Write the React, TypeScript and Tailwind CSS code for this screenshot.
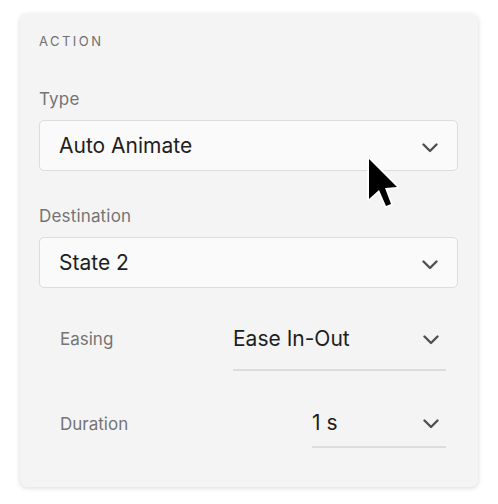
function Chevron({ className = "" }: { className?: string }) {
  return (
    <svg width="16" height="10" viewBox="0 0 16 10" fill="none" className={className}>
      <path d="M1.5 1.5 L8 8 L14.5 1.5" stroke="#505050" strokeWidth="2.4" strokeLinecap="round" strokeLinejoin="round" />
    </svg>
  );
}

function Select({ value }: { value: string }) {
  return (
    <div className="flex h-[51px] items-center justify-between rounded-[5px] border border-[#dcdcdc] bg-[#fafafa] pl-[19px] pr-[19px]">
      <span className="text-[21px] leading-[24px] text-[#1e1e1e]">{value}</span>
      <Chevron className="mt-[5px]" />
    </div>
  );
}

function InlineSelect({ label, value, width, labelPad, bottomPad }: { label: string; value: string; width: string; labelPad: string; bottomPad: string }) {
  return (
    <div className="flex items-start justify-between pl-[21px] pr-[12px]">
      <span className={`${labelPad} text-[17px] leading-[20px] text-[#747474]`}>{label}</span>
      <div className={`${width} ${bottomPad} flex items-center justify-between border-b-2 border-[#dcdcdc] pr-[7px]`}>
        <span className="text-[21px] leading-[24px] text-[#1e1e1e]">{value}</span>
        <Chevron className="mt-[2px]" />
      </div>
    </div>
  );
}

export default function App() {
  return (
    <div className="h-[504px] w-[498px] bg-white pt-[14px] pl-[20px] font-['Inter','Noto_Sans',sans-serif]">
      <div className="relative h-[473px] w-[458px] rounded-[7px] bg-[#f4f4f4] pl-[19px] pr-[20px] pt-[19px] shadow-[0_1px_5px_rgba(0,0,0,0.16)]">
        <div className="text-[13px] leading-[16px] tracking-[0.19em] text-[#6f6f6f]">ACTION</div>

        <div className="mt-[40px] text-[17px] leading-[20px] tracking-[0.01em] text-[#747474]">Type</div>
        <div className="mt-[11px]">
          <Select value="Auto Animate" />
        </div>

        <div className="mt-[35px] text-[17px] leading-[20px] tracking-[0.01em] text-[#747474]">Destination</div>
        <div className="mt-[11px]">
          <Select value="State 2" />
        </div>

        <div className="mt-[39px]">
          <InlineSelect label="Easing" value="Ease In-Out" width="w-[213px]" labelPad="pt-[2px]" bottomPad="pb-[18px]" />
        </div>
        <div className="mt-[40px]">
          <InlineSelect label="Duration" value="1 s" width="w-[134px]" labelPad="pt-[3px]" bottomPad="pb-[11px]" />
        </div>

        {/* pointer hovering the type picker */}
        <svg width="40" height="60" viewBox="-4 -4 40 60" className="absolute left-[345px] top-[141px]">
          <polygon
            points="0,0 0,40 10,31 17,47 22,45 16,29 28,28"
            fill="#000"
            stroke="#fff"
            strokeWidth="3.5"
            strokeLinejoin="round"
            paintOrder="stroke"
          />
        </svg>
      </div>
    </div>
  );
}
